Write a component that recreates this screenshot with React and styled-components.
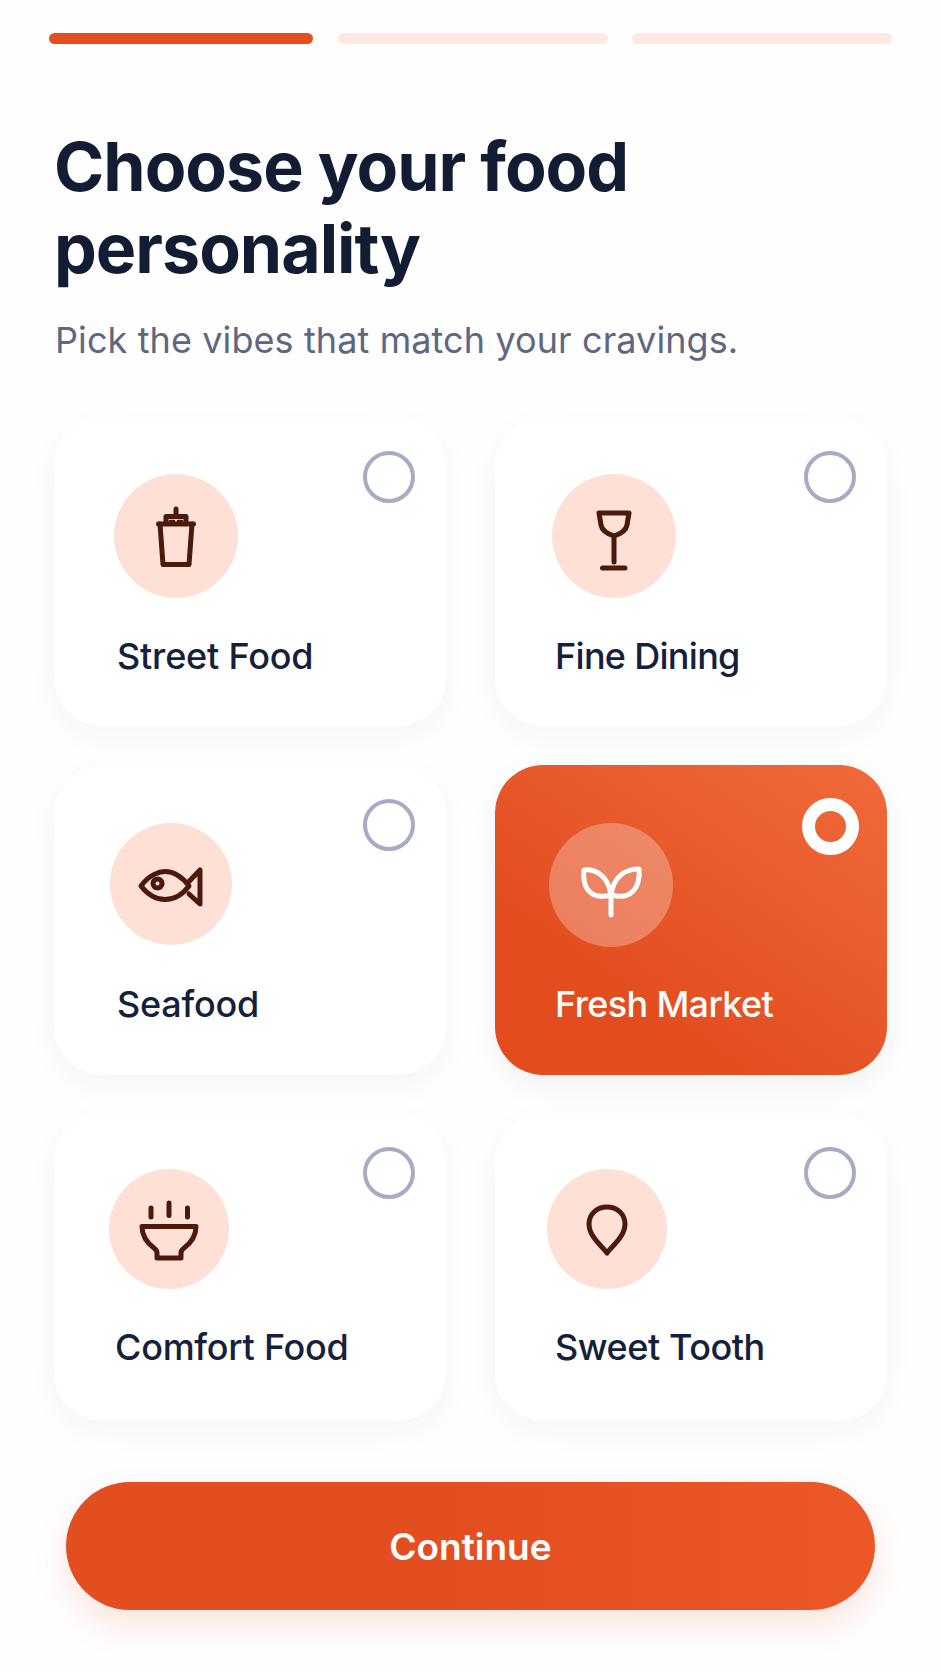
import React from "react";
import styled, { createGlobalStyle } from "styled-components";

const Global = createGlobalStyle`
  html, body { margin: 0; padding: 0; background: #fefefe; }
  * { box-sizing: border-box; }
`;

const Page = styled.main`
  width: 941px;
  height: 1672px;
  padding-top: 33px;
  overflow: hidden;
  font-family: Inter, "Liberation Sans", sans-serif;
  background: #fefefe;
`;

const Progress = styled.div`
  display: grid;
  grid-template-columns: 264px 270px 260px;
  column-gap: 24.5px;
  margin: 0 49px;
`;

const Bar = styled.div`
  height: 11px;
  border-radius: 5.5px;
  background: ${(p) => (p.$active ? "#e44e20" : "#fee8e1")};
`;

const Title = styled.h1`
  margin: 81px 0 0 54px;
  font-size: 68px;
  line-height: 82px;
  font-weight: 700;
  letter-spacing: -1px;
  color: #121c33;
`;

const Subtitle = styled.p`
  margin: 29px 0 0 55px;
  font-size: 36px;
  line-height: 44px;
  font-weight: 400;
  letter-spacing: 0.1px;
  color: #5f6780;
`;

const Grid = styled.div`
  display: grid;
  grid-template-columns: 392px 392px;
  column-gap: 49px;
  row-gap: 38.5px;
  margin: 55px 0 0 54px;
`;

const Card = styled.div`
  position: relative;
  height: ${(p) => p.$h}px;
  padding-top: ${(p) => p.$top}px;
  border-radius: 48px;
  background: ${(p) =>
    p.$selected ? "linear-gradient(35deg, #e24c1f 25%, #f06a3a 100%)" : "#ffffff"};
  box-shadow: 0 10px 30px rgba(30, 35, 60, ${(p) => (p.$selected ? 0.06 : 0.045)});
`;

const IconCircle = styled.div`
  display: flex;
  align-items: center;
  justify-content: center;
  width: ${(p) => p.$size}px;
  height: ${(p) => p.$size}px;
  margin-left: ${(p) => p.$left}px;
  border-radius: 50%;
  background: ${(p) => (p.$selected ? "rgba(255,255,255,0.28)" : "#fee0d6")};
`;

const Label = styled.div`
  margin: ${(p) => p.$gap}px 0 0 ${(p) => p.$left}px;
  font-size: 36px;
  line-height: 44px;
  font-weight: 500;
  letter-spacing: ${(p) => p.$tracking}px;
  color: ${(p) => (p.$selected ? "#ffffff" : "#15213a")};
`;

const Radio = styled.span`
  position: absolute;
  top: ${(p) => (p.$selected ? 33 : 34)}px;
  right: ${(p) => (p.$selected ? 28 : 31)}px;
  width: ${(p) => (p.$selected ? 57 : 52)}px;
  height: ${(p) => (p.$selected ? 57 : 52)}px;
  border-radius: 50%;
  border: ${(p) => (p.$selected ? "13px solid #ffffff" : "4px solid #a6acc3")};
`;

const Button = styled.button`
  display: block;
  width: 809px;
  height: 128px;
  margin: 61px 0 0 66px;
  border: 0;
  border-radius: 64px;
  background: linear-gradient(90deg, #e34e20 0%, #e34e20 45%, #ec5828 100%);
  box-shadow: 0 16px 34px rgba(228, 78, 32, 0.14);
  color: #ffffff;
  font-family: inherit;
  font-size: 37px;
  font-weight: 600;
`;

const Glyph = styled.svg`
  width: 72px;
  height: 72px;
  flex: none;
  fill: none;
  stroke: ${(p) => (p.$selected ? "#ffffff" : "#4a1a0c")};
  stroke-width: 5;
  stroke-linecap: round;
  stroke-linejoin: round;
`;

const icons = {
  cup: (
    <>
      <path d="M36 9V16" />
      <path d="M26 22V16.5H46V22" />
      <path d="M30 21H34M38 21H42" strokeWidth="2.5" />
      <path d="M18.5 24H53.5" />
      <path d="M20 24L23 64.5H49L52 24" />
    </>
  ),
  wine: (
    <>
      <path d="M21 13H51L49 25C48 31 42 34 36 36C30 34 24 31 23 25Z" />
      <path d="M36 36V62" />
      <path d="M24.5 68H47" />
    </>
  ),
  fish: (
    <>
      <path d="M6 38C14 27 24 23.5 30 23.5C40 23.5 48 30 54 38C48 46 40 51.5 30 51.5C22 51.5 13 47 6 38Z" />
      <path d="M54 33.5L65 22V56L54 46" />
      <circle cx="22.5" cy="35.5" r="4.5" />
    </>
  ),
  sprout: (
    <>
      <path d="M36 40V66" />
      <path d="M9 21C19 20 33 25 36 46C28 48 20 48 15 43C9 38 8 28 9 21Z" />
      <path d="M64 20C53 20 39 25 36 46C44 48 52 48 57 43C63 38 65 28 64 20Z" />
    </>
  ),
  bowl: (
    <>
      <path d="M18 15V24M36 10V22.5M54.5 15V24" />
      <path d="M9 33.5H63C63 42 58 50 50.5 55.5C48.5 57 48 58 48 60V65H24V60C24 58 23.5 57 21.5 55.5C14 50 9 42 9 33.5Z" />
    </>
  ),
  drop: (
    <path d="M36 60C32 54 18 44 18 31C18 21 26 14 36 14C46 14 54 21 54 31C54 44 40 54 36 60Z" />
  ),
};

const cards = [
  { name: "Street Food", icon: "cup", h: 309, top: 57, size: 124, cl: 60, ll: 63, gap: 36, tracking: -0.2 },
  { name: "Fine Dining", icon: "wine", h: 309, top: 57, size: 124, cl: 57, ll: 60, gap: 36, tracking: -0.7 },
  { name: "Seafood", icon: "fish", h: 310, top: 58, size: 122, cl: 56, ll: 63, gap: 37, tracking: -0.25 },
  { name: "Fresh Market", icon: "sprout", h: 310, top: 58, size: 124, cl: 54, ll: 60, gap: 35, tracking: -0.65, selected: true },
  { name: "Comfort Food", icon: "bowl", h: 308, top: 56, size: 120, cl: 55, ll: 61, gap: 36, tracking: -0.25 },
  { name: "Sweet Tooth", icon: "drop", h: 308, top: 56, size: 120, cl: 52, ll: 60, gap: 36, tracking: -0.45 },
];

export default function App() {
  return (
    <Page>
      <Global />
      <Progress>
        <Bar $active />
        <Bar />
        <Bar />
      </Progress>
      <Title>
        Choose your food
        <br />
        personality
      </Title>
      <Subtitle>Pick the vibes that match your cravings.</Subtitle>
      <Grid>
        {cards.map((c) => (
          <Card key={c.name} $h={c.h} $top={c.top} $selected={c.selected}>
            <Radio $selected={c.selected} />
            <IconCircle $size={c.size} $left={c.cl} $selected={c.selected}>
              <Glyph viewBox="0 0 72 72" $selected={c.selected}>
                {icons[c.icon]}
              </Glyph>
            </IconCircle>
            <Label $left={c.ll} $gap={c.gap} $tracking={c.tracking} $selected={c.selected}>
              {c.name}
            </Label>
          </Card>
        ))}
      </Grid>
      <Button>Continue</Button>
    </Page>
  );
}
